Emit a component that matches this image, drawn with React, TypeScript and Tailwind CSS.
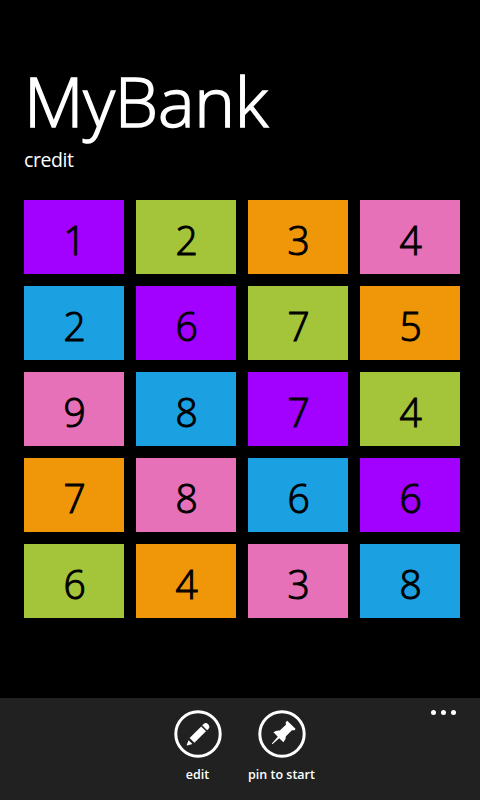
const PURPLE = "bg-[#a200ff]";
const LIME = "bg-[#a4c43a]";
const ORANGE = "bg-[#f09609]";
const PINK = "bg-[#e671b8]";
const BLUE = "bg-[#1ba1e2]";

const tiles: [number, string][] = [
  [1, PURPLE], [2, LIME], [3, ORANGE], [4, PINK],
  [2, BLUE], [6, PURPLE], [7, LIME], [5, ORANGE],
  [9, PINK], [8, BLUE], [7, PURPLE], [4, LIME],
  [7, ORANGE], [8, PINK], [6, BLUE], [6, PURPLE],
  [6, LIME], [4, ORANGE], [3, PINK], [8, BLUE],
];

function EditIcon() {
  return (
    <svg width="48" height="48" viewBox="0 0 48 48" fill="#fff">
      <circle cx="24" cy="24" r="22.2" fill="none" stroke="#fff" strokeWidth="3" />
      <path d="M15.6 28 27.2 16.4 32 21.2 20.4 32.8Z" />
      <path d="M28.2 15.3 29.6 13.9Q31.8 12 34.2 14.2Q36.3 16.6 34.6 18.7L33.1 20.2Z" />
      <path d="M14.6 30.2 18.4 34 13.2 35.6Q12.4 35.6 12.8 34.8Z" />
    </svg>
  );
}

function PinIcon() {
  return (
    <svg width="48" height="48" viewBox="0 0 48 48" fill="#fff">
      <circle cx="24" cy="24" r="22.2" fill="none" stroke="#fff" strokeWidth="3" />
      <path d="M29.2 10.7 37.5 18.7 36.7 20.3 34 20.2 27.9 26.2Q28.2 29.4 25.4 32.2L21.2 28.2 14.4 34.2 13.8 33.6 19.8 26.8 15.4 22.2Q18.8 19.8 21.8 20.6L27.9 14.7 27.7 12.2Z" />
    </svg>
  );
}

export default function App() {
  return (
    <main className="flex h-[800px] w-[480px] flex-col overflow-hidden bg-black font-['Open_Sans','Noto_Sans',sans-serif] text-white">
      <header className="h-[200px] pl-6 pt-[54px]">
        <h1 className="h-[92px] text-[69px] font-light leading-[92px] tracking-[-0.2px] [-webkit-text-stroke:1.5px_white]">MyBank</h1>
        <p className="text-[19.5px] leading-[28px] tracking-[-0.4px]">credit</p>
      </header>
      <section className="grid grid-cols-[repeat(4,100px)] gap-3 pl-6">
        {tiles.map(([digit, color], i) => (
          <div key={i} className={`flex h-[74px] items-center justify-center text-black ${color}`}>
            <span className="scale-x-[0.95] pl-px pt-[3px] text-[41px] font-light leading-[74px] [-webkit-text-stroke:1.1px_black]">{digit}</span>
          </div>
        ))}
      </section>
      <footer className="relative mt-auto flex h-[102px] justify-center gap-[26px] bg-[#212121] pr-px pt-3">
        <button className="flex w-[58px] flex-col items-center">
          <EditIcon />
          <span className="mt-[7px] text-[12.5px] font-semibold leading-5">edit</span>
        </button>
        <button className="flex w-[58px] flex-col items-center">
          <PinIcon />
          <span className="mt-[7px] whitespace-nowrap text-[12.5px] font-semibold leading-5">pin to start</span>
        </button>
        <button aria-label="more" className="absolute right-6 top-3 flex gap-[5px]">
          <span className="size-[5px] rounded-full bg-white" />
          <span className="size-[5px] rounded-full bg-white" />
          <span className="size-[5px] rounded-full bg-white" />
        </button>
      </footer>
    </main>
  );
}
